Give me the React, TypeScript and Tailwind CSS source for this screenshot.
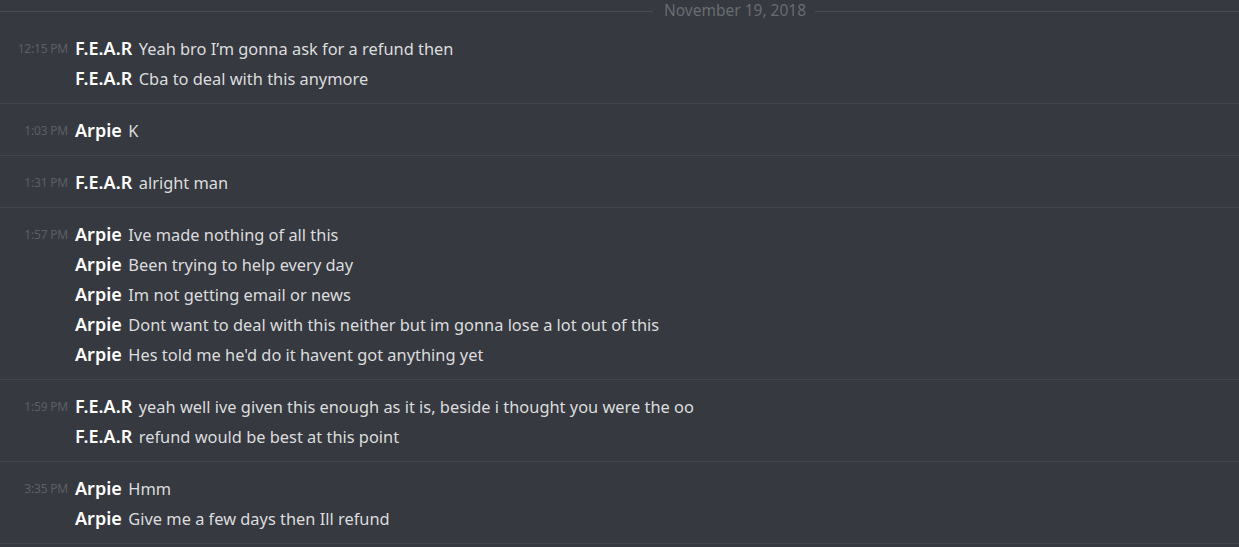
import type { ReactNode } from "react";

type Line = { name: string; text: string };
type Group = { time: string; lines: Line[] };

const groups: Group[] = [
  {
    time: "12:15 PM",
    lines: [
      { name: "F.E.A.R", text: "Yeah bro I\u2019m gonna ask for a refund then" },
      { name: "F.E.A.R", text: "Cba to deal with this anymore" },
    ],
  },
  { time: "1:03 PM", lines: [{ name: "Arpie", text: "K" }] },
  { time: "1:31 PM", lines: [{ name: "F.E.A.R", text: "alright man" }] },
  {
    time: "1:57 PM",
    lines: [
      { name: "Arpie", text: "Ive made nothing of all this" },
      { name: "Arpie", text: "Been trying to help every day" },
      { name: "Arpie", text: "Im not getting email or news" },
      { name: "Arpie", text: "Dont want to deal with this neither but im gonna lose a lot out of this" },
      { name: "Arpie", text: "Hes told me he'd do it havent got anything yet" },
    ],
  },
  {
    time: "1:59 PM",
    lines: [
      { name: "F.E.A.R", text: "yeah well ive given this enough as it is, beside i thought you were the oo" },
      { name: "F.E.A.R", text: "refund would be best at this point" },
    ],
  },
  {
    time: "3:35 PM",
    lines: [
      { name: "Arpie", text: "Hmm" },
      { name: "Arpie", text: "Give me a few days then Ill refund" },
    ],
  },
];

const Row = ({ time, children }: { time?: string; children: ReactNode }) => (
  <div className="flex h-[30px] items-center">
    <span className="w-[68px] shrink-0 pt-[2px] text-right text-[12px] tracking-[-0.2px] text-[#5b5f66]">
      {time}
    </span>
    <div className="ml-[7px] flex items-baseline gap-[6.5px] whitespace-nowrap">{children}</div>
  </div>
);

export default function App() {
  return (
    <div
      className="h-[547px] w-full overflow-hidden bg-[#36393f]"
      style={{ fontFamily: '"Noto Sans", "Open Sans", sans-serif' }}
    >
      <div className="relative flex h-[22px] items-center">
        <div className="h-px w-[653px] bg-[#4a4d53]" />
        <span className="pl-[11px] pr-[9px] text-[15.5px] text-[#686c73]">November 19, 2018</span>
        <div className="h-px flex-1 bg-[#4a4d53]" />
      </div>
      {groups.map((group, gi) => (
        <div key={gi} className="border-b border-[#43464c] pb-[10px] pt-[11px]">
          {group.lines.map((line, li) => (
            <Row key={li} time={li === 0 ? group.time : undefined}>
              <span className="text-[18px] font-semibold text-white">{line.name}</span>
              <span className="text-[16.4px] text-[#dcddde]">{line.text}</span>
            </Row>
          ))}
        </div>
      ))}
    </div>
  );
}
